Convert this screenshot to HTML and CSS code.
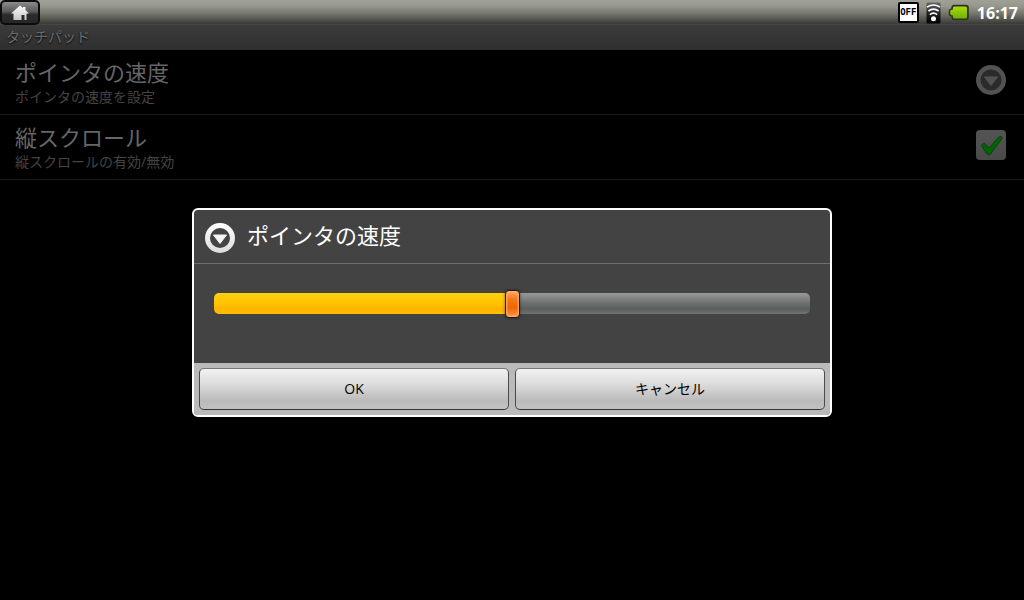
FILE: index.html
```html
<!DOCTYPE html>
<html lang="ja">
<head>
    <meta charset="utf-8">
    <meta name="viewport" content="width=device-width, initial-scale=1.0">
    <title>タッチパッド</title>
    <link rel="stylesheet" href="styles.css">
</head>
<body>
    <header class="statusbar">
        <button class="home" type="button" aria-label="ホーム">
            <svg width="20" height="16" viewBox="0 0 20 16">
                <defs>
                    <linearGradient id="homeFill" x1="0" y1="0" x2="0" y2="1">
                        <stop offset="0" stop-color="#fff"/>
                        <stop offset="1" stop-color="#c4c4c4"/>
                    </linearGradient>
                </defs>
                <path fill="url(#homeFill)" d="M10 0.5 L13 3 V2 H15.5 V5 L19 8.4 H16.5 V15 H14.5 V10 H11.5 V15 H3.5 V8.4 H1 Z"/>
            </svg>
        </button>
        <div class="tray">
            <span class="off">OFF</span>
            <svg class="wifi" width="16" height="22" viewBox="0 0 16 22">
                <defs>
                    <linearGradient id="wifiBg" x1="0" y1="0" x2="0" y2="1">
                        <stop offset="0" stop-color="#666"/>
                        <stop offset="0.5" stop-color="#222"/>
                        <stop offset="1" stop-color="#000"/>
                    </linearGradient>
                </defs>
                <rect x="0.5" y="0.5" width="14" height="21" rx="1.5" fill="url(#wifiBg)"/>
                <g fill="none" stroke="#fff" stroke-width="1.6">
                    <path d="M1 5.2 Q7.5 0.8 14 5.2"/>
                    <path d="M2.4 9 Q7.5 5.2 12.6 9"/>
                    <path d="M3.8 12.6 Q7.5 9.6 11.2 12.6"/>
                </g>
                <circle cx="7.5" cy="16.8" r="2.5" fill="#fff"/>
            </svg>
            <svg class="battery" width="22" height="18" viewBox="0 0 22 18">
                <defs>
                    <linearGradient id="batteryFill" x1="0" y1="0" x2="0" y2="1">
                        <stop offset="0" stop-color="#a6dc10"/>
                        <stop offset="1" stop-color="#72b000"/>
                    </linearGradient>
                </defs>
                <path d="M6 0.8 H18 Q20.8 0.8 20.8 3.5 V13.5 Q20.8 16.2 18 16.2 H6 Q3.4 16.2 3.2 12.5 Q0.8 12 0.8 10.5 V6.5 Q0.8 5 3.2 4.5 Q3.4 0.8 6 0.8 Z" fill="#2e3422"/>
                <path d="M6.5 2.4 H17.5 Q19 2.4 19 4 V13 Q19 14.6 17.5 14.6 H6.5 Q4.8 14.6 4.8 12.5 V11.2 H3.6 Q2.2 11 2.2 9.8 V7.2 Q2.2 6 3.6 5.8 H4.8 V4.5 Q4.8 2.4 6.5 2.4 Z" fill="url(#batteryFill)"/>
            </svg>
            <time class="clock">16:17</time>
        </div>
    </header>

    <main class="screen">
        <h1 class="titlebar">タッチパッド</h1>
        <ul class="prefs">
            <li>
                <button class="pref" type="button">
                    <span class="pref-text">
                        <span class="pref-title">ポインタの速度</span>
                        <span class="pref-summary">ポインタの速度を設定</span>
                    </span>
                    <svg width="30" height="30" viewBox="0 0 30 30">
                        <circle cx="15" cy="15" r="15" fill="#525252"/>
                        <circle cx="15" cy="15" r="10.5" fill="#2a2c2a"/>
                        <path d="M8.5 12 H21.5 L15 20.5 Z" fill="#525252" stroke="#525252" stroke-linejoin="round"/>
                    </svg>
                </button>
            </li>
            <li>
                <label class="pref">
                    <span class="pref-text">
                        <span class="pref-title">縦スクロール</span>
                        <span class="pref-summary">縦スクロールの有効/無効</span>
                    </span>
                    <span class="check">
                        <input type="checkbox" checked>
                        <svg width="30" height="30" viewBox="0 0 30 30">
                            <path d="M5.5 15.5 Q6.5 12.8 9 13.6 L13 18 L22.5 7.2 Q25.5 5.2 26.3 8.2 L14.5 24 Q12.5 26 10.8 23.8 Z" fill="#066006" stroke="#0c400c"/>
                        </svg>
                    </span>
                </label>
            </li>
        </ul>

        <div class="overlay">
            <form class="dialog" role="dialog" aria-labelledby="dialogTitle">
                <div class="dialog-head">
                    <svg width="32" height="32" viewBox="0 0 32 32">
                        <defs>
                            <linearGradient id="ringFill" x1="0" y1="0" x2="0" y2="1">
                                <stop offset="0" stop-color="#fff"/>
                                <stop offset="1" stop-color="#dcdcdc"/>
                            </linearGradient>
                        </defs>
                        <circle cx="16" cy="17" r="15" fill="url(#ringFill)"/>
                        <circle cx="16" cy="17" r="10" fill="#444"/>
                        <path d="M9.5 14 H22.5 L16 22.5 Z" fill="#f4f4f4" stroke="#f4f4f4" stroke-linejoin="round"/>
                    </svg>
                    <h2 id="dialogTitle">ポインタの速度</h2>
                </div>
                <div class="dialog-body">
                    <input class="slider" type="range" min="0" max="100" value="50" aria-labelledby="dialogTitle">
                </div>
                <div class="dialog-buttons">
                    <button type="button">OK</button>
                    <button type="button">キャンセル</button>
                </div>
            </form>
        </div>
    </main>

    <script>
        const slider = document.querySelector('.slider');

        slider.addEventListener('input', function() {
            slider.style.setProperty('--value', slider.value + '%');
        });
    </script>
</body>
</html>
```
FILE: styles.css
```css
* {
    box-sizing: border-box;
}
body {
    display: flex;
    flex-direction: column;
    min-height: 100vh;
    margin: 0;
    background-color: #000;
    font-family: "Open Sans", "Noto Sans CJK JP", sans-serif;
    font-size: 14px;
}
button {
    font-family: inherit;
    cursor: pointer;
}
svg {
    display: block;
    flex-shrink: 0;
}

/* status bar */
.statusbar {
    display: flex;
    justify-content: space-between;
    align-items: center;
    height: 25px;
    background: linear-gradient(#a0a096 0%, #96978d 25%, #74756c 55%, #3c3d37 94%, #4a4b48 100%);
}
.home {
    display: flex;
    justify-content: center;
    align-items: center;
    width: 40px;
    height: 25px;
    padding: 0;
    border: 2px solid #0c0c0c;
    border-radius: 5px;
    background: linear-gradient(#8c8c8c, #5a5a5a 45%, #2c2c2c 60%, #262626);
}
.tray {
    display: flex;
    align-items: center;
    padding-right: 6px;
}
.off {
    width: 21px;
    height: 21px;
    border: 2px solid #000;
    border-radius: 2px;
    background-color: #fff;
    color: #000;
    font: bold 9px/17px "DejaVu Sans Mono", monospace;
    text-align: center;
}
.wifi {
    margin-left: 7px;
}
.battery {
    margin-left: 6px;
}
.clock {
    margin-left: 7px;
    color: #fff;
    font-size: 16px;
    font-weight: bold;
    line-height: 24px;
}

/* settings list */
.screen {
    position: relative;
    flex: 1;
}
.titlebar {
    height: 25px;
    margin: 0;
    padding-left: 6px;
    background: linear-gradient(#3a3b3a, #2e2f2e);
    color: #6c6c6c;
    font-size: 14px;
    font-weight: normal;
    line-height: 24px;
    text-shadow: 0 1px 2px #000;
}
.prefs {
    margin: 0;
    padding: 0;
    list-style: none;
}
.pref {
    display: flex;
    justify-content: space-between;
    align-items: center;
    width: 100%;
    height: 65px;
    padding: 0 18px 4px 15px;
    border: 0;
    border-bottom: 1px solid #1a1a1a;
    background: none;
    text-align: left;
    cursor: pointer;
}
.pref-text {
    display: flex;
    flex-direction: column;
    padding-top: 6px;
}
.pref-title {
    color: #666;
    font-size: 22px;
    line-height: 28px;
}
.pref-summary {
    color: #444;
    font-size: 14px;
    line-height: 22px;
}
.check {
    display: grid;
}
.check input,
.check svg {
    grid-area: 1 / 1;
}
.check input {
    appearance: none;
    width: 30px;
    height: 30px;
    margin: 0;
    border-radius: 4px;
    background: linear-gradient(#545454, #4a4a4a);
}
.check svg {
    pointer-events: none;
}
.check input:not(:checked) + svg {
    visibility: hidden;
}

/* dialog */
.overlay {
    position: absolute;
    inset: 0;
    display: flex;
    justify-content: center;
    align-items: center;
}
.dialog {
    width: 62.5%;
    overflow: hidden;
    border: 2px solid #fff;
    border-radius: 6px;
    background-color: #434343;
}
.dialog-head {
    display: flex;
    align-items: center;
    gap: 11px;
    height: 54px;
    padding-left: 10px;
    border-bottom: 1px solid #6e6e6e;
}
.dialog-head h2 {
    margin: 0;
    padding-bottom: 4px;
    color: #fff;
    font-size: 22px;
    font-weight: normal;
    line-height: 28px;
}
.dialog-body {
    height: 99px;
    padding: 25px 20px;
}
.slider {
    --value: 50%;
    appearance: none;
    display: block;
    width: 100%;
    height: 28px;
    margin: 0;
    background: none;
}
.slider::-webkit-slider-runnable-track {
    height: 21px;
    border-radius: 5px;
    background:
        linear-gradient(#ffd010, #ffc400 50%, #ffb400 75%, #ffc000) 0 0 / var(--value) 100% no-repeat,
        linear-gradient(#989a98, #6c706d 50%, #5a605b 75%, #6e736f);
}
.slider::-webkit-slider-thumb {
    appearance: none;
    width: 15px;
    height: 28px;
    margin-top: -3px;
    border: 1px solid #2c1606;
    border-radius: 4px;
    background: linear-gradient(#ffac70, #f47a1c 30%, #ee6600 65%, #ff9a50);
    box-shadow: inset 0 0 2px 1px #ffb47c, 0 0 3px rgba(0, 0, 0, 0.5);
}
.dialog-buttons {
    display: flex;
    gap: 6px;
    padding: 5px;
    background-color: #bababa;
}
.dialog-buttons button {
    flex: 1;
    height: 42px;
    padding: 0 0 2px;
    border: 1px solid #4a4a4a;
    border-top-color: #777;
    border-bottom-color: #333;
    border-radius: 5px;
    background: linear-gradient(#f2f2f2, #dadada 40%, #bababa 80%, #c2c2c2);
    color: #000;
    font-size: 14px;
}
```
